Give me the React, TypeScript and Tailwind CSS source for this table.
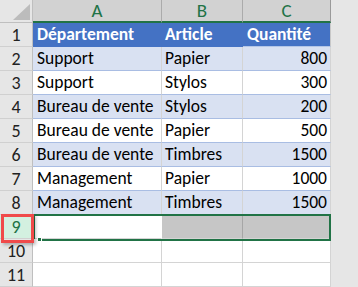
import React from "react";

const font = { fontFamily: "Carlito, Calibri, Lato, 'Liberation Sans', sans-serif" };

type Row = { n: number; a: string; b: string; c: string; kind: "head" | "band" | "white" | "sel" | "empty" };

const rows: Row[] = [
  { n: 1, a: "Département", b: "Article", c: "Quantité", kind: "head" },
  { n: 2, a: "Support", b: "Papier", c: "800", kind: "band" },
  { n: 3, a: "Support", b: "Stylos", c: "300", kind: "white" },
  { n: 4, a: "Bureau de vente", b: "Stylos", c: "200", kind: "band" },
  { n: 5, a: "Bureau de vente", b: "Papier", c: "500", kind: "white" },
  { n: 6, a: "Bureau de vente", b: "Timbres", c: "1500", kind: "band" },
  { n: 7, a: "Management", b: "Papier", c: "1000", kind: "white" },
  { n: 8, a: "Management", b: "Timbres", c: "1500", kind: "band" },
  { n: 9, a: "", b: "", c: "", kind: "sel" },
  { n: 10, a: "", b: "", c: "", kind: "empty" },
  { n: 11, a: "", b: "", c: "", kind: "empty" },
];

function BodyRow({ r }: { r: Row }) {
  const isSel = r.kind === "sel";
  const rowHead = isSel
    ? "bg-[#d3f0e0] text-[#217346]"
    : "bg-[#e6e6e6] text-[#222]";
  let cellA = "";
  let cellB = "";
  let cellC = "";
  if (r.kind === "head") {
    cellA = cellB = "bg-[#4472c4] text-white font-bold border-b border-b-[#4472c4]";
    cellC = "bg-[#4472c4] text-white font-bold border-r border-r-[#c8c8c8] border-b border-b-[#b4c6e7]";
    cellA += " border-r border-r-[#4472c4]";
    cellB += " border-r border-r-[#4472c4]";
  } else if (r.kind === "band") {
    cellA = cellB = cellC = "bg-[#d9e1f2] text-black border-r border-r-[#d4d4d4] border-b border-b-[#a9bde3]";
  } else if (r.kind === "white") {
    cellA = cellB = cellC = "bg-white text-black border-r border-r-[#d4d4d4] border-b border-b-[#a9bde3]";
  } else if (isSel) {
    cellA = "bg-white border-r border-r-white border-b border-b-[#d4d4d4]";
    cellB = cellC = "bg-[#c6c6c6] border-r border-r-[#a6a6a6] border-b border-b-[#d4d4d4]";
  } else {
    cellA = cellB = cellC = "bg-white border-r border-r-[#d4d4d4] border-b border-b-[#d4d4d4]";
  }
  return (
    <div className="flex h-[24px]">
      <div
        className={`w-[33px] h-full flex items-center justify-center border-r border-r-[#bfbfbf] border-b border-b-[#d0d0d0] text-[18px] leading-none ${rowHead}`}
      >
        {r.n}
      </div>
      <div className={`w-[129px] h-full flex items-center pl-[4px] pt-[1px] text-[17.5px] leading-none whitespace-nowrap ${cellA}`}>{r.a}</div>
      <div className={`w-[81px] h-full flex items-center pl-[3px] pt-[1px] text-[17.5px] leading-none whitespace-nowrap ${cellB}`}>{r.b}</div>
      <div
        className={`w-[88px] h-full flex items-center pt-[1px] text-[17.5px] leading-none whitespace-nowrap ${
          r.kind === "head" ? "pl-[4px]" : "justify-end pr-[3px]"
        } ${cellC}`}
      >
        {r.c}
      </div>
    </div>
  );
}

export default function App() {
  return (
    <div className="relative w-[358px] h-[287px] overflow-hidden bg-[#e6e6e6] flex" style={font}>
      <div className="w-[331px] flex flex-col shrink-0">
        <div className="flex h-[23px]">
          <div className="w-[33px] h-full bg-[#e6e6e6] border-r border-r-[#bfbfbf] border-b border-b-[#bfbfbf] relative">
            <svg width="33" height="23" className="absolute left-0 top-0">
              <polygon points="13,20 30,20 30,4" fill="#bcbcbc" />
            </svg>
          </div>
          <div className="w-[129px] h-full bg-[#d2d2d2] border-r border-r-[#ababab] border-b-2 border-b-[#217346] flex items-center justify-center text-[19px] leading-none text-[#217346]">
            A
          </div>
          <div className="w-[81px] h-full bg-[#d2d2d2] border-r border-r-[#ababab] border-b-2 border-b-[#217346] flex items-center justify-center text-[19px] leading-none text-[#217346]">
            B
          </div>
          <div className="w-[88px] h-full bg-[#d2d2d2] border-r border-r-[#9a9a9a] border-b-2 border-b-[#217346] flex items-center justify-center text-[19px] leading-none text-[#217346]">
            C
          </div>
        </div>
        {rows.map((r) => (
          <BodyRow key={r.n} r={r} />
        ))}
      </div>
      <div className="flex-1 bg-[#e6e6e6]" />

      {/* selection border */}
      <div className="absolute left-[33px] top-[214px] w-[298px] h-[27px] border-2 border-[#217346]" />
      <div className="absolute left-[33px] top-[239px] w-[5px] h-[2px] bg-white" />
      <div className="absolute left-[37px] top-[237px] w-[5px] h-[5px] bg-[#217346] border border-white" />

      {/* red annotation box */}
      <div className="absolute left-[1px] top-[214px] w-[33px] h-[29px] border-[3px] border-[#f04a4a] shadow-[2px_2px_3px_rgba(0,0,0,0.25)]" />
    </div>
  );
}
